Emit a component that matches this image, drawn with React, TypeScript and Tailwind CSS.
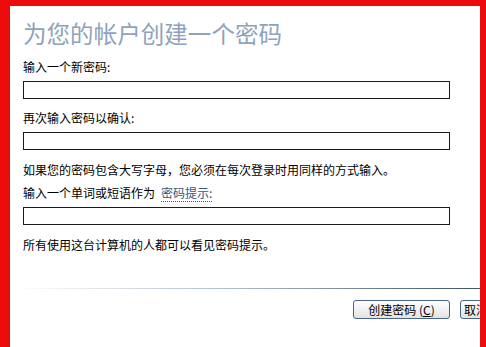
import React from "react";

export default function App() {
  const font = { fontFamily: '"Noto Sans CJK SC", "Noto Sans", sans-serif' };
  return (
    <div
      className="w-[486px] h-[347px] overflow-hidden bg-white border-t-[6px] border-l-[10px] border-r-[6px] border-[#ec0b0b] box-border"
      style={font}
    >
      <div className="pl-[13px] pt-[13px] flex flex-col text-[12px] leading-[16px] text-black">
        <h1 className="text-[23.5px] leading-[28px] text-[#8ea2bd] font-normal tracking-[0.05px] whitespace-nowrap">
          为您的帐户创建一个密码
        </h1>
        <div className="mt-[12px] whitespace-nowrap">输入一个新密码:</div>
        <div className="mt-[6px] w-[427px] h-[18px] border border-[#1a1a1a] bg-white" />
        <div className="mt-[11px] whitespace-nowrap">再次输入密码以确认:</div>
        <div className="mt-[6px] w-[427px] h-[18px] border border-[#1a1a1a] bg-white" />
        <div className="mt-[12px] whitespace-nowrap">
          如果您的密码包含大写字母，您必须在每次登录时用同样的方式输入。
        </div>
        <div className="mt-[7px] whitespace-nowrap flex">
          <span>输入一个单词或短语作为</span>
          <span className="ml-[6px] text-[#2c5a7e] border-b border-dotted border-[#2c5a7e]">
            密码提示:
          </span>
        </div>
        <div className="mt-[5px] w-[427px] h-[18px] border border-[#1a1a1a] bg-white" />
        <div className="mt-[12px] whitespace-nowrap">
          所有使用这台计算机的人都可以看见密码提示。
        </div>
        <div className="mt-[35px] -ml-[6px] h-px bg-gradient-to-r from-[#ffffff] via-[#a9b6c2] to-[#3f5568]" />
        <div className="mt-[11px] flex justify-end whitespace-nowrap -mr-[40px]">
          <button className="w-[97px] h-[19px] rounded-[3px] border border-[#4b6384] bg-gradient-to-b from-[#ffffff] to-[#e3e3e3] text-[12px] leading-[16px] text-black flex items-center justify-center">
            创建密码 (<span className="underline">C</span>)
          </button>
          <button className="ml-[10px] w-[60px] h-[19px] rounded-[3px] border border-[#4b6384] bg-gradient-to-b from-[#ffffff] to-[#e3e3e3] text-[12px] leading-[16px] text-black flex items-center justify-start pl-[3px]">
            取消
          </button>
        </div>
      </div>
    </div>
  );
}
